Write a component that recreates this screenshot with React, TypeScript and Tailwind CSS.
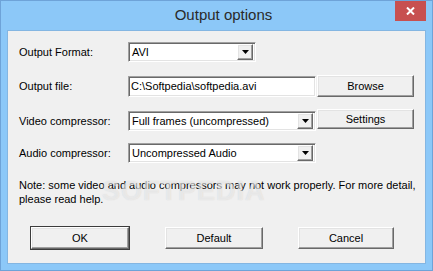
import { ReactNode } from "react";

const sunken =
  "border border-t-[#a0a0a0] border-l-[#a0a0a0] border-r-white border-b-white shadow-[inset_1px_1px_0_#696969,inset_-1px_-1px_0_#e3e3e3]";

const raised =
  "border border-t-white border-l-white border-r-[#696969] border-b-[#696969] shadow-[inset_-1px_-1px_0_#a0a0a0,inset_1px_1px_0_#e3e3e3]";

const Arrow = () => (
  <div className={`w-[16px] h-[16px] bg-[#f0f0f0] flex items-center justify-center ${raised}`}>
    <svg width="7" height="4" viewBox="0 0 7 4">
      <path d="M0 0h7L3.5 4z" fill="#000" />
    </svg>
  </div>
);

const Combo = ({ value, width }: { value: string; width: string }) => (
  <div className={`${width} h-[20px] bg-white flex items-center justify-between pl-[3px] pr-[2px] ${sunken}`}>
    <span>{value}</span>
    <Arrow />
  </div>
);

const PushButton = ({
  children,
  className = "",
  isDefault = false,
}: {
  children: ReactNode;
  className?: string;
  isDefault?: boolean;
}) => (
  <div
    className={`bg-[#f0f0f0] flex items-center justify-center ${
      isDefault ? "outline outline-1 outline-[#3c3c3c]" : ""
    } ${raised} ${className}`}
  >
    {children}
  </div>
);

export default function App() {
  return (
    <div className="w-[433px] h-[271px] bg-[#8cc8f8] border border-[#6ea3d8] flex flex-col font-['Liberation_Sans',Arial,sans-serif] text-[11px] text-black">
      <div className="h-[29px] flex items-start relative">
        <div className="flex-1 h-[28px] flex items-center justify-center text-[15px] text-[#2a2a2a] pl-[14px]">
          Output options
        </div>
        <div className="absolute right-[6px] top-0 w-[31px] h-[20px] bg-[#c75050] flex items-center justify-center">
          <svg width="9" height="8" viewBox="0 0 9 8">
            <path d="M1 0.5l7 7M8 0.5l-7 7" stroke="#fff" strokeWidth="2" />
          </svg>
        </div>
      </div>

      <div className="mx-[6px] h-[234px] bg-[#f0f0f0] border border-[#84b6e2] relative flex flex-col">
        <div className="flex items-center h-[20px] mt-[11px] pl-[11px]">
          <span className="w-[109px]">Output Format:</span>
          <Combo value="AVI" width="w-[128px]" />
        </div>

        <div className="flex items-center h-[22px] mt-[13px] pl-[11px]">
          <span className="w-[109px]">Output file:</span>
          <div className={`w-[188px] h-[21px] bg-white flex items-center pl-[2px] ${sunken}`}>
            C:\Softpedia\softpedia.avi
          </div>
          <PushButton className="w-[97px] h-[22px] ml-[1px]">Browse</PushButton>
        </div>

        <div className="flex h-[22px] mt-[12px] pl-[11px]">
          <span className="w-[109px] self-end h-[20px] flex items-center">Video compressor:</span>
          <div className="self-end">
            <Combo value="Full frames (uncompressed)" width="w-[188px]" />
          </div>
          <PushButton className="w-[97px] h-[20px] ml-[1px] self-start">Settings</PushButton>
        </div>

        <div className="flex items-center h-[20px] mt-[12px] pl-[11px]">
          <span className="w-[109px]">Audio compressor:</span>
          <Combo value="Uncompressed Audio" width="w-[188px]" />
        </div>

        <p className="mt-[15px] pl-[11px] leading-[14px]">
          Note: some video and audio compressors may not work properly. For more detail,
          <br />
          please read help.
        </p>

        <div className="flex mt-[21px] pl-[23px]">
          <PushButton isDefault className="w-[98px] h-[22px]">OK</PushButton>
          <PushButton className="w-[98px] h-[22px] ml-[36px]">Default</PushButton>
          <PushButton className="w-[96px] h-[22px] ml-[35px]">Cancel</PushButton>
        </div>

        <div className="absolute left-[94px] top-[140px] text-[27px] font-bold tracking-[1px] text-white/50 [text-shadow:0_0_1px_rgba(150,150,150,0.35)] pointer-events-none">
          SOFTPEDIA
        </div>
      </div>
    </div>
  );
}
